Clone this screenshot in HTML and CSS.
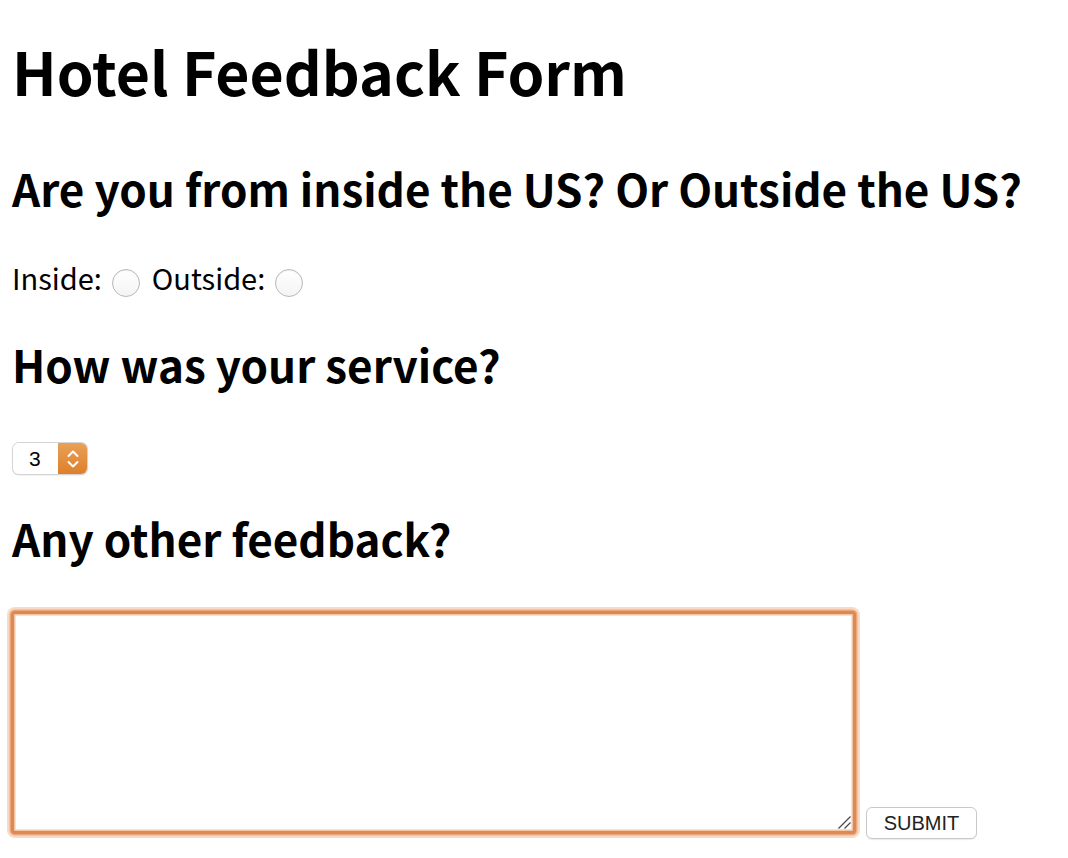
FILE: index.html
```html
<!DOCTYPE html>
<html>
<head>
<meta charset="utf-8">
<title>Hotel Feedback Form</title>
<link rel="stylesheet" href="styles.css">
</head>
<body>
<form class="form">
  <h1 class="title">Hotel Feedback Form</h1>
  <h2 class="question q1">Are you from inside the US? Or Outside the US?</h2>
  <p class="choices">
    <label class="choice">Inside: <input class="radio" type="radio" name="loc"></label>
    <label class="choice">Outside: <input class="radio" type="radio" name="loc"></label>
  </p>
  <h2 class="question q2">How was your service?</h2>
  <div class="select">
    <span class="select-value">3</span>
    <span class="select-arrows">
      <svg width="14" height="22" viewBox="0 0 14 22"><path d="M2.5 8 L7 3.5 L11.5 8 M2.5 14 L7 18.5 L11.5 14" fill="none" stroke="#fff" stroke-width="2" stroke-linecap="round" stroke-linejoin="round"/></svg>
    </span>
  </div>
  <h2 class="question q3">Any other feedback?</h2>
  <div class="bottom">
    <div class="textarea-wrap">
      <textarea class="textarea"></textarea>
      <svg class="grip" width="16" height="16" viewBox="0 0 16 16"><path d="M14.5 2.5 L2.5 14.5 M14.5 8.5 L8.5 14.5" stroke="#4a4a4a" stroke-width="1.3" fill="none"/></svg>
    </div>
    <button class="submit" type="button">SUBMIT</button>
  </div>
</form>
</body>
</html>
```
FILE: styles.css
```css
html, body {
  margin: 0;
  padding: 0;
  background: #fff;
}
body {
  font-family: "Noto Sans CJK KR", "Noto Sans", sans-serif;
  color: #000;
}
.form {
  padding: 0 11px 0 12px;
}
.title {
  font-size: 59px;
  font-weight: bold;
  line-height: 70px;
  margin: 36px 0 0 0;
}
.question {
  font-size: 44px;
  font-weight: bold;
  line-height: 54px;
  margin: 0;
}
.q1 { margin-top: 55px; }
.q2 { margin-top: 40px; }
.q3 { margin-top: 37px; }
.choices {
  font-size: 29px;
  line-height: 36px;
  margin: 44px 0 0 0;
  display: flex;
  gap: 12px;
  align-items: flex-start;
}
.choice {
  display: flex;
  align-items: flex-start;
  gap: 10px;
}
.radio {
  appearance: none;
  -webkit-appearance: none;
  width: 28px;
  height: 28px;
  margin: 10px 0 0 0;
  border-radius: 50%;
  border: 1.5px solid #b9b9b9;
  background: linear-gradient(#ffffff, #f4f4f4);
  box-shadow: inset 0 1px 1px rgba(0,0,0,0.06);
  box-sizing: border-box;
}
.select {
  margin: 52px 0 0 1px;
  display: flex;
  width: 74px;
  height: 31px;
  border-radius: 6px;
  box-shadow: 0 0 0 1px #d4d4d4, 0 1px 2px rgba(0,0,0,0.2);
  overflow: hidden;
  font-family: "Liberation Sans", Arial, sans-serif;
  font-size: 21px;
}
.select-value {
  flex: 1;
  display: flex;
  align-items: center;
  padding-left: 16px;
  background: #fff;
}
.select-arrows {
  width: 29px;
  background: linear-gradient(#e9a157, #de7f2c);
  display: flex;
  align-items: center;
  justify-content: center;
}
.bottom {
  margin: 46px 0 0 -1px;
  display: flex;
  align-items: flex-end;
  gap: 10px;
  padding-bottom: 2px;
}
.textarea-wrap {
  position: relative;
  width: 845px;
  height: 223px;
  margin-bottom: 5px;
}
.textarea {
  width: 100%;
  height: 100%;
  box-sizing: border-box;
  border: 3px solid #d98a58;
  border-radius: 4px;
  box-shadow: 0 0 0 1.5px #eba97c, 0 0 0 4px #f9dac4, inset 0 0 0 1.5px #f3c3a2;
  resize: none;
  outline: none;
  margin: 0;
  display: block;
  background: #fff;
}
.grip {
  position: absolute;
  right: 4px;
  bottom: 4px;
}
.submit {
  width: 111px;
  height: 32px;
  border: 1px solid #c9c9c9;
  border-radius: 6px;
  background: #fff;
  box-shadow: 0 1px 1px rgba(0,0,0,0.08);
  font-family: "Liberation Sans", Arial, sans-serif;
  font-size: 20px;
  color: #222;
  padding: 0;
  margin: 0;
}
```
